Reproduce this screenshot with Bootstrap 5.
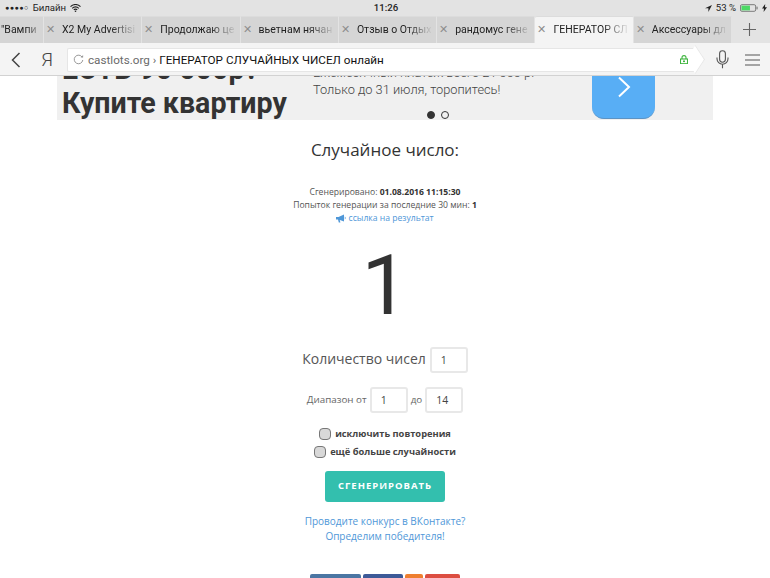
<!DOCTYPE html>
<html lang="ru">
<head>
    <meta charset="UTF-8">
    <meta name="viewport" content="width=device-width, initial-scale=1.0">
    <title>ГЕНЕРАТОР СЛУЧАЙНЫХ ЧИСЕЛ онлайн</title>
    <link href="https://cdn.jsdelivr.net/npm/bootstrap@5.3.3/dist/css/bootstrap.min.css" rel="stylesheet">
    <style>
        html, body { height: 100%; overflow: hidden; }
        body { background: #fff; font-family: "Open Sans", sans-serif; color: #333; }

        .status-bar { height: 16px; background: #e3e3e3; font: 9.6px/16px Roboto, sans-serif; color: #222; padding: 0 3px 0 5px; }
        .status-side { width: 200px; }
        .dots { letter-spacing: .5px; font-size: 7px; }

        .tab-strip { height: 27px; background: #e3e3e3; }
        .tab-item { height: 27px; width: 98.3px; background: #d5d5d5; border-right: 1px solid #e3e3e3; border-top: 1px solid #dcdcdc; font: 10.5px/26px Roboto, sans-serif; color: #222; white-space: nowrap; overflow: hidden; flex: none; }
        .tab-first { width: 44px; padding-left: 1px; }
        .tab-item.is-active { background: #f4f4f4; border-radius: 2px 2px 0 0; }
        .tab-close { color: #8d8d8d; font-size: 11px; width: 13px; margin-right: 5px; flex: none; text-align: center; }
        .tab-label { overflow: hidden; flex: 1; -webkit-mask-image: linear-gradient(to right, #000 62%, transparent 96%); mask-image: linear-gradient(to right, #000 62%, transparent 96%); }
        .tab-plus { flex: 1; }

        .tool-bar { height: 33px; background: #f4f4f4; border-bottom: 1px solid #d2d2d2; padding: 5px 10px 4px 11px; }
        .ya-letter { font: 300 19px/24px "Liberation Sans Narrow", Roboto, sans-serif; color: #444; width: 20px; margin-left: 16px; margin-right: 10px; text-align: center; }
        .address-box { flex: 1; height: 24px; background: #fff; border: 1px solid #e6e6e6; border-right: 0; border-radius: 2px 0 0 2px; font: 11.7px/22px Roboto, sans-serif; color: #111; padding-left: 5px; position: relative; margin-right: 20px; }
        .address-box::after { content: ""; position: absolute; right: -8px; top: 2px; width: 17px; height: 17px; background: #fff; border-top: 1px solid #e6e6e6; border-right: 1px solid #e6e6e6; transform: rotate(45deg) skew(12deg, 12deg); }
        .address-host { color: #6a6a6a; }
        .lock-icon { position: absolute; right: 8px; top: 6px; z-index: 1; }

        .promo { margin: 0 57px; height: 44px; background: #f0f0f0; overflow: hidden; position: relative; font-family: Roboto, sans-serif; }
        .promo-title { position: absolute; left: 5px; bottom: 0; font-weight: 700; font-size: 28.6px; line-height: 34px; color: #333; white-space: nowrap; }
        .promo-text { position: absolute; left: 256px; bottom: 22px; font-weight: 300; font-size: 12.8px; line-height: 17px; color: #444; white-space: nowrap; }
        .promo-button { position: absolute; left: 535px; top: -20px; width: 63px; height: 63px; background: #58aef5; border-radius: 0 0 12px 12px; border-bottom: 1px solid #5c93c4; }
        .promo-dots { position: absolute; left: 370px; bottom: 1px; gap: 6px; }
        .promo-dot { width: 8px; height: 8px; border-radius: 50%; border: 1px solid #333; }
        .promo-dot.is-on { background: #333; }

        .result-title { font-size: 17px; line-height: 24px; margin-top: 20px; color: #333; position: relative; top: -2px; }
        .result-meta { font-size: 8.6px; line-height: 13px; margin-top: 22px; color: #555; }
        .result-meta b { color: #333; }
        .result-link, .contest-link { color: #4f97d8; text-decoration: none; }
        .big-number { font-family: Roboto, sans-serif; font-weight: 400; font-size: 84px; line-height: 100px; color: #333; margin-top: 11px; }

        .count-label { font-size: 14px; color: #555; margin-bottom: 3px; }
        .range-label { font-size: 9.8px; color: #666; }
        .num-input { width: 38px; height: 26px; padding: 0 0 0 9px; border: 2px solid #e8e8e8; border-radius: 3px; font-size: 10.5px; color: #444; }
        .form-row-a { margin-top: 11px; gap: 4px; }
        .form-row-b { margin-top: 14px; gap: 3px; }
        .check-list { margin-top: 12px; }
        .check-row { font-size: 9.3px; font-weight: 700; color: #444; height: 18px; gap: 4px; }
        .check-box { width: 12px; height: 12px; margin: 0; background: #d8d8d8; border: 1px solid #777; border-radius: 4px; }
        .generate-btn { width: 120px; height: 31px; padding: 0; margin-top: 10px; background: #33bfae; border: 0; border-radius: 3px; color: #fff; font-size: 9.5px; font-weight: 700; letter-spacing: 1px; }
        .contest-text { font-size: 10px; line-height: 15px; margin-top: 12px; }

        .share-row { margin-top: 30px; gap: 2px; }
        .share-item { height: 10px; border-radius: 2px 2px 0 0; }
        .share-a { width: 51px; background: #4b76a3; }
        .share-b { width: 40px; background: #3d5a98; }
        .share-c { width: 18px; background: #ee7f30; }
        .share-d { width: 35px; background: #dc4e41; }
    </style>
</head>
<body>
    <div class="status-bar d-flex justify-content-between align-items-center">
        <div class="status-side d-flex align-items-center gap-1">
            <span class="dots">●●●●○</span><span>Билайн</span>
            <svg width="11" height="8" viewBox="0 0 11 8"><path d="M.5 2.6a7 7 0 0 1 10 0M2.2 4.3a4.6 4.6 0 0 1 6.6 0M3.8 5.9a2.3 2.3 0 0 1 3.4 0" fill="none" stroke="#222" stroke-width="1.1"/><circle cx="5.5" cy="7.2" r=".8" fill="#222"/></svg>
        </div>
        <div class="fw-medium">11:26</div>
        <div class="status-side d-flex align-items-center justify-content-end gap-1">
            <svg width="7" height="7" viewBox="0 0 7 7"><path d="M7 0 0 3.2h3.4V7z" fill="#222"/></svg>
            <span>53 %</span>
            <svg width="18" height="8" viewBox="0 0 19 8"><rect x=".5" y=".5" width="16" height="7" rx="1.5" fill="none" stroke="#777"/><rect x="1.5" y="1.5" width="9" height="5" fill="#4cd964"/><rect x="17.4" y="2.6" width="1.2" height="2.8" fill="#777"/></svg>
            <svg width="5" height="8" viewBox="0 0 5 8"><path d="M3.2 0 0 4.6h2L1.6 8 5 3.2H3z" fill="#222"/></svg>
        </div>
    </div>

    <div class="tab-strip d-flex" id="tabs"></div>

    <div class="tool-bar d-flex align-items-center">
        <svg width="10" height="16" viewBox="0 0 10 16"><path d="M8.5 1 1.5 8l7 7" fill="none" stroke="#444" stroke-width="1.5"/></svg>
        <div class="ya-letter">Я</div>
        <div class="address-box d-flex align-items-center">
            <svg width="11" height="11" viewBox="0 0 11 11" class="me-1"><path d="M9.2 3.2A4.3 4.3 0 1 0 9.8 6" fill="none" stroke="#999"/><path d="M7.6 3.6h2.5V1z" fill="#999"/></svg>
            <span class="address-host">castlots.org ›&nbsp;</span><span>ГЕНЕРАТОР СЛУЧАЙНЫХ ЧИСЕЛ онлайн</span>
            <svg class="lock-icon" width="8" height="9" viewBox="0 0 8 9"><path d="M2 4V2.6a2 2 0 0 1 4 0V4" fill="none" stroke="#3fb53f" stroke-width="1.1"/><rect x=".5" y="4" width="7" height="4.7" fill="none" stroke="#3fb53f" stroke-width="1.1"/><rect x="3" y="5.5" width="2" height="1.6" fill="#3fb53f"/></svg>
        </div>
        <svg width="13" height="19" viewBox="0 0 13 19"><rect x="3.6" y=".7" width="5.8" height="11.5" rx="2.9" fill="none" stroke="#555" stroke-width="1.1"/><path d="M1 7.5v1.2a5.5 5.5 0 0 0 11 0V7.5M6.5 14.2v4" fill="none" stroke="#555" stroke-width="1.1"/></svg>
        <svg class="ms-3" width="15" height="12" viewBox="0 0 15 12"><path d="M0 1h15M0 6h15M0 11h15" stroke="#555" stroke-width="1.2"/></svg>
    </div>

    <div class="promo">
        <div class="promo-title">ЕСТЬ 90 000р?<br>Купите квартиру</div>
        <div class="promo-text">Ежемесячный платеж всего 21 000 р.<br>Только до 31 июля, торопитесь!</div>
        <div class="promo-dots d-flex"><div class="promo-dot is-on"></div><div class="promo-dot"></div></div>
        <div class="promo-button d-flex align-items-end justify-content-center pb-3">
            <svg class="mb-1" width="14" height="22" viewBox="0 0 14 22"><path d="M2 1.5 12 11 2 20.5" fill="none" stroke="#fff" stroke-width="2"/></svg>
        </div>
    </div>

    <main class="text-center">
        <h1 class="result-title fw-normal mb-0">Случайное число:</h1>
        <div class="result-meta">
            <div>Сгенерировано: <b>01.08.2016 11:15:30</b></div>
            <div>Попыток генерации за последние 30 мин: <b>1</b></div>
            <a class="result-link" href="#">
                <svg width="10" height="9" viewBox="0 0 10 9"><path d="M0 3h2.5L8 .5v7L2.5 5.5H0zM2 5.6h1.6L4.4 8.6H2.8zM8.8 2.6a1.8 1.8 0 0 1 0 2.8" fill="#4f97d8"/></svg>
                ссылка на результат</a>
        </div>
        <div class="big-number">1</div>

        <div class="form-row-a d-flex justify-content-center align-items-center">
            <label class="count-label" for="countInput">Количество чисел</label>
            <input class="form-control num-input" id="countInput" type="text" value="1">
        </div>
        <div class="form-row-b d-flex justify-content-center align-items-center">
            <label class="range-label" for="fromInput">Диапазон от</label>
            <input class="form-control num-input" id="fromInput" type="text" value="1">
            <span class="range-label">до</span>
            <input class="form-control num-input" id="toInput" type="text" value="14">
        </div>
        <div class="check-list">
            <div class="check-row d-flex justify-content-center align-items-center">
                <span class="check-box d-inline-block"></span><span>исключить повторения</span>
            </div>
            <div class="check-row d-flex justify-content-center align-items-center">
                <span class="check-box d-inline-block"></span><span>ещё больше случайности</span>
            </div>
        </div>
        <button class="btn generate-btn" type="button">СГЕНЕРИРОВАТЬ</button>
        <div class="contest-text">
            <a class="contest-link d-block" href="#">Проводите конкурс в ВКонтакте?</a>
            <a class="contest-link d-block" href="#">Определим победителя!</a>
        </div>
        <div class="share-row d-flex justify-content-center">
            <div class="share-item share-a"></div>
            <div class="share-item share-b"></div>
            <div class="share-item share-c"></div>
            <div class="share-item share-d"></div>
        </div>
    </main>

    <script src="https://cdn.jsdelivr.net/npm/bootstrap@5.3.3/dist/js/bootstrap.bundle.min.js"></script>
    <script>
        const tabTitles = ['X2 My Advertisi', 'Продолжаю це', 'вьетнам нячан', 'Отзыв о Отдых', 'рандомус гене', 'ГЕНЕРАТОР СЛ', 'Аксессуары дл'];
        const tabs = document.getElementById('tabs');

        let html = '<div class="tab-item tab-first d-flex"><span class="tab-label">"Вампи</span></div>';
        tabTitles.forEach((title, index) => {
            const active = index === 5 ? ' is-active' : '';
            html += `<div class="tab-item d-flex${active}"><span class="tab-close">✕</span><span class="tab-label">${title}</span></div>`;
        });
        html += '<div class="tab-plus d-flex align-items-center justify-content-center pe-1"><svg width="13" height="13" viewBox="0 0 13 13"><path d="M6.5 0v13M0 6.5h13" stroke="#666" stroke-width="1.1"/></svg></div>';
        tabs.innerHTML = html;
    </script>
</body>
</html>
